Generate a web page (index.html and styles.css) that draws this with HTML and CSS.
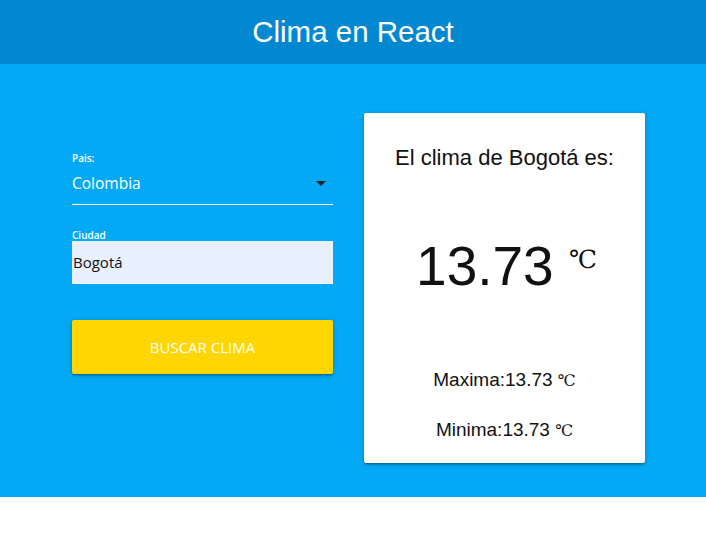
FILE: index.html
```html
<!DOCTYPE html>
<html lang="es">
<head>
<meta charset="utf-8">
<title>Clima en React</title>
<link rel="stylesheet" href="styles.css">
</head>
<body>
<header class="topbar">
  <h1 class="title">Clima en React</h1>
</header>
<main class="main">
  <div class="content">
    <form class="form">
      <div class="field">
        <label class="label">Pais:</label>
        <div class="select">
          <span class="select-value">Colombia</span>
          <svg class="caret" width="10" height="5" viewBox="0 0 10 5"><path d="M0 0h10L5 5z" fill="#222"/></svg>
        </div>
      </div>
      <div class="field field-city">
        <label class="label">Ciudad</label>
        <div class="input">Bogotá</div>
      </div>
      <button type="button" class="btn">BUSCAR CLIMA</button>
    </form>
    <section class="card">
      <h2 class="card-title">El clima de Bogotá es:</h2>
      <p class="temp">13.73 <span class="unit-big">℃</span></p>
      <p class="minmax">Maxima:13.73 <span class="unit">℃</span></p>
      <p class="minmax">Minima:13.73 <span class="unit">℃</span></p>
    </section>
  </div>
</main>
</body>
</html>
```

FILE: styles.css
```css
* { box-sizing: border-box; }
body {
  margin: 0;
  font-family: "Liberation Sans", Arial, sans-serif;
  background: #fff;
}
.topbar {
  height: 64px;
  background: #0288d1;
  display: flex;
  align-items: center;
  justify-content: center;
}
.title {
  margin: 0;
  color: #fff;
  font-weight: normal;
  font-size: 29.5px;
  line-height: 1;
  padding-bottom: 1px;
}
.main {
  background: #03a9f4;
  height: 433px;
  padding-top: 49px;
}
.content {
  display: flex;
  padding-left: 72px;
  gap: 31px;
  align-items: flex-start;
}
.form {
  width: 261px;
  padding-top: 39px;
  font-family: "Open Sans", "Noto Sans", sans-serif;
}
.label {
  display: block;
  color: #fff;
  font-size: 10px;
  font-weight: 600;
  line-height: 12px;
}
.select {
  display: flex;
  align-items: center;
  justify-content: space-between;
  height: 41px;
  border-bottom: 1px solid #fff;
  padding-right: 7px;
}
.select-value {
  color: #fff;
  font-size: 15.5px;
  margin-top: -2px;
}
.caret { margin-top: -2px; }
.field-city { margin-top: 25px; }
.field-city .label { line-height: 11px; }
.input {
  height: 43px;
  background: #e8f0fe;
  color: #111;
  font-size: 15px;
  display: flex;
  align-items: center;
  padding-left: 1px;
  border-bottom: 1px solid #fff;
}
.btn {
  margin-top: 36px;
  width: 261px;
  height: 54px;
  border: none;
  border-radius: 2px;
  background: #ffd600;
  color: #fff;
  font-family: "Open Sans", "Noto Sans", sans-serif;
  font-size: 15px;
  box-shadow: 0 2px 2px 0 rgba(0,0,0,0.14), 0 3px 1px -2px rgba(0,0,0,0.12), 0 1px 5px 0 rgba(0,0,0,0.2);
}
.card {
  width: 281px;
  height: 350px;
  background: #fff;
  border-radius: 2px;
  box-shadow: 0 2px 2px 0 rgba(0,0,0,0.14), 0 3px 1px -2px rgba(0,0,0,0.12), 0 1px 5px 0 rgba(0,0,0,0.2);
  text-align: center;
  color: #111;
  padding-top: 33px;
}
.card-title {
  margin: 0;
  font-size: 22px;
  font-weight: normal;
  line-height: 24px;
}
.temp {
  margin: 64px 0 0;
  font-size: 55px;
  line-height: 64px;
  padding-left: 4px;
}
.unit-big {
  font-family: "DejaVu Serif", serif;
  font-size: 25px;
  vertical-align: top;
  position: relative;
  top: -6px;
}
.minmax {
  margin: 0;
  font-size: 19px;
  line-height: 22px;
}
.temp + .minmax { margin-top: 71px; }
.minmax + .minmax { margin-top: 27px; }
.unit {
  font-family: "DejaVu Serif", serif;
  font-size: 16px;
}
```
